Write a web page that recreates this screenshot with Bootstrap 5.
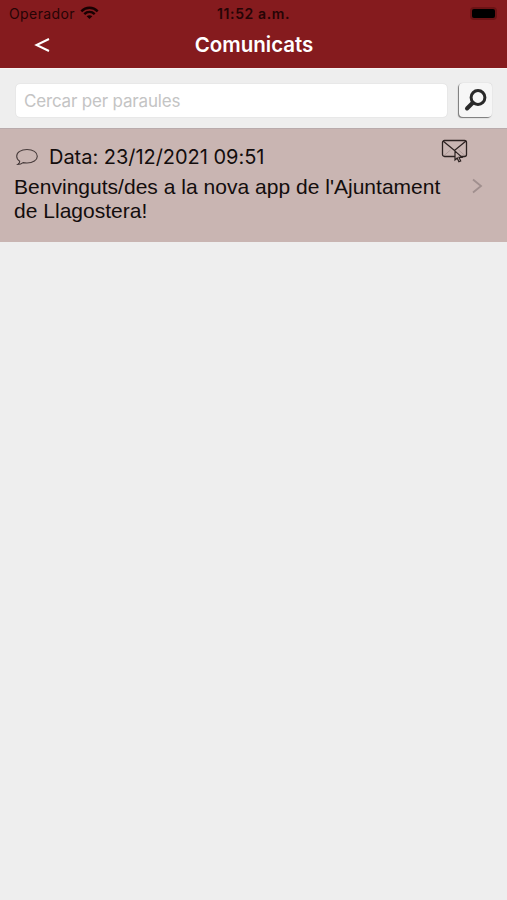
<!DOCTYPE html>
<html lang="ca">
<head>
<meta charset="utf-8">
<meta name="viewport" content="width=device-width, initial-scale=1">
<title>Comunicats</title>
<link href="https://cdn.jsdelivr.net/npm/bootstrap@5.3.0/dist/css/bootstrap.min.css" rel="stylesheet">
<style>
body { background: #eee; font-family: Inter, "Liberation Sans", sans-serif; color: #130d0d; }
svg { display: block; flex: none; }
.app-head { background: #851b1e; height: 68px; }
.status { height: 27px; font-size: 14px; line-height: 27px; color: #260405; }
.side { flex: 1 1 0; }
.operator { letter-spacing: .4px; padding-left: 9px; }
.wifi { margin-left: 5px; margin-top: -1px; }
.clock { font-weight: 600; letter-spacing: .6px; }
.battery { width: 23px; height: 9px; border-radius: 2px; background: #000; box-shadow: 0 0 0 2px #6c1315; margin-right: 12px; }
.title-row { height: 36px; color: #fff; }
.back { width: 84px; line-height: 36px; color: #fff; text-decoration: none; }
.title { font-size: 20.5px; font-weight: 600; line-height: 36px; padding-left: 1px; }
.search { height: 60px; padding: 14px 15px 11px 15px; gap: 11px; border-top: 1px solid #f8f4f3; }
.search .form-control { height: 35px; border: 1px solid #e8e8e8; border-radius: 5px; padding: 0 8px; font-size: 17px; letter-spacing: -.18px; box-shadow: none; }
.search .form-control::placeholder { color: #c4c4c4; opacity: 1; }
.search .btn { width: 33px; height: 34px; border-radius: 4px; background: #f6f6f6; border: 0; box-shadow: -1px 1px 1px #777, 0 0 1px #bbb; }
.notice { height: 114px; background: #c9b5b2; border-top: 1px solid #b9abac; padding: 14px 0 0 14px; color: inherit; text-decoration: none; }
.notice-body { width: 433px; }
.notice-date { height: 28px; font-size: 20px; line-height: 28px; letter-spacing: -.03px; gap: 10px; }
.notice-text { font-family: "Liberation Sans", sans-serif; font-size: 21px; line-height: 24px; padding-top: 4px; letter-spacing: .02px; white-space: nowrap; }
.notice-side { width: 60px; }
.envelope { margin: -4px 0 0 -6px; }
.notice-action { width: 37px; height: 114px; margin-top: -14px; padding-top: 49px; background: #c9b5b2; }
</style>
</head>
<body>
<header class="app-head">
  <div class="status d-flex align-items-center">
    <div class="side d-flex align-items-center">
      <span class="operator">Operador</span>
      <svg class="wifi" width="19" height="14" viewBox="0 0 20 14" fill="none" stroke="#180102" stroke-width="2.6">
        <path d="M1.4 5.2C6.2.3 13.8.3 18.6 5.2"/><path d="M4.5 8.2c3.2-3 7.8-3 11 0"/><path d="M7 10.4c1.8-1.5 4.2-1.5 6 0l-3 3z" fill="#180102" stroke="none"/>
      </svg>
    </div>
    <span class="clock">11:52 a.m.</span>
    <div class="side d-flex justify-content-end"><div class="battery"></div></div>
  </div>
  <nav class="title-row d-flex justify-content-between">
    <a class="back d-flex justify-content-center align-items-center" href="#" aria-label="Enrere">
      <svg width="16" height="14" viewBox="0 0 16 14" fill="none" stroke="#fff" stroke-width="2"><path d="M15 1 2.500 7 15 13"/></svg>
    </a>
    <h1 class="title m-0">Comunicats</h1>
    <span class="back"></span>
  </nav>
</header>
<form class="search d-flex">
  <input class="form-control" type="text" placeholder="Cercar per paraules">
  <button class="btn p-0 d-flex align-items-center justify-content-center flex-shrink-0" type="button" aria-label="Cercar">
    <svg width="24" height="24" viewBox="0 0 24 24" fill="none" stroke="#292929" stroke-linecap="round"><circle cx="14" cy="9.500" r="6.900" stroke-width="3"/><path d="m8.500 15-5.500 5.500" stroke-width="4"/></svg>
  </button>
</form>
<a class="notice d-flex" href="#">
  <div class="notice-body">
    <div class="notice-date d-flex align-items-center">
      <svg width="25" height="20" viewBox="0 0 25 20" fill="none" stroke="#473b3b" stroke-width="1.100"><path d="M5.700 14.200C3.800 13 2.700 11.200 2.700 9.200 2.700 5.300 7 2.500 13 2.500s10.300 2.800 10.300 6.700S19 16 13 16c-1.400 0-2.700-.1-3.900-.4-1.500 1.300-3.200 1.900-5.300 1.900 1.300-.9 2-2 1.900-3.300z"/></svg>
      <span>Data: 23/12/2021 09:51</span>
    </div>
    <div class="notice-text">Benvinguts/des a la nova app de l'Ajuntament<br>de Llagostera!</div>
  </div>
  <div class="notice-side d-flex">
    <svg class="envelope" width="27" height="25" viewBox="0 0 27 25" fill="none" stroke="#2c2221" stroke-width="1.300"><rect x="1.500" y="1.500" width="24" height="16" rx="2"/><path d="m2 2 11.500 9.500L25 2"/><path d="M2.500 17l7-6M24.500 17l-7-6" stroke-width=".6" opacity=".3"/><path d="M14 12v9l2.200-2 1.700 3.800 1.800-.8-1.700-3.600h3z" fill="#c9b5b2" stroke-width="1.200"/></svg>
    <div class="notice-action ms-auto"><svg width="16" height="16" viewBox="0 0 16 16" fill="none" stroke="#a08f8e" stroke-width="1.800"><path d="m3 1.500 8 6.500-8 6.500"/></svg></div>
  </div>
</a>
<script src="https://cdn.jsdelivr.net/npm/bootstrap@5.3.0/dist/js/bootstrap.bundle.min.js"></script>
</body>
</html>
